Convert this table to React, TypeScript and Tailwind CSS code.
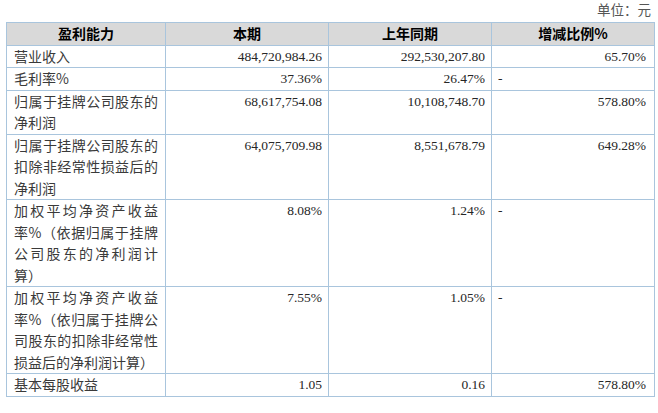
const rows: { label: string; cur: string; prev: string; change: string; dash?: boolean }[] = [
  { label: "营业收入", cur: "484,720,984.26", prev: "292,530,207.80", change: "65.70%" },
  { label: "毛利率%", cur: "37.36%", prev: "26.47%", change: "-", dash: true },
  { label: "归属于挂牌公司股东的净利润", cur: "68,617,754.08", prev: "10,108,748.70", change: "578.80%" },
  {
    label: "归属于挂牌公司股东的扣除非经常性损益后的净利润",
    cur: "64,075,709.98",
    prev: "8,551,678.79",
    change: "649.28%",
  },
  {
    label: "加权平均净资产收益率%（依据归属于挂牌公司股东的净利润计算）",
    cur: "8.08%",
    prev: "1.24%",
    change: "-",
    dash: true,
  },
  {
    label: "加权平均净资产收益率%（依归属于挂牌公司股东的扣除非经常性损益后的净利润计算）",
    cur: "7.55%",
    prev: "1.05%",
    change: "-",
    dash: true,
  },
  { label: "基本每股收益", cur: "1.05", prev: "0.16", change: "578.80%" },
];

export default function App() {
  const cell = "border border-[#a9c5dd] align-top leading-[21.5px] p-0";
  return (
    <div className="w-[658px] h-[413px] bg-white font-['Liberation_Serif','Noto_Sans_CJK_SC',serif] text-[#262626]">
      <div className="h-[22px] pr-[7px] pt-[3px] text-right text-[13.5px] leading-[16px] text-[#555]">
        单位：元
      </div>
      <table className="ml-[6px] w-[648px] table-fixed border-collapse">
        <colgroup>
          <col className="w-[159px]" />
          <col className="w-[163px]" />
          <col className="w-[163px]" />
          <col className="w-[163px]" />
        </colgroup>
        <thead>
          <tr className="bg-[#d9d9d9] font-['Noto_Sans_CJK_SC',sans-serif] text-[14px] font-bold text-black">
            <th className={`${cell} text-center align-middle`}>盈利能力</th>
            <th className={`${cell} text-center align-middle`}>本期</th>
            <th className={`${cell} text-center align-middle`}>上年同期</th>
            <th className={`${cell} text-center align-middle`}>增减比例%</th>
          </tr>
        </thead>
        <tbody>
          {rows.map((r) => (
            <tr key={r.label}>
              <td className={`${cell} px-[7px] text-justify font-['Noto_Sans_CJK_SC',sans-serif] text-[14px] text-[#3a3a3a]`}>
                {r.label}
              </td>
              <td className={`${cell} pr-[6px] text-right text-[13.5px]`}>{r.cur}</td>
              <td className={`${cell} pr-[6px] text-right text-[13.5px]`}>{r.prev}</td>
              <td className={`${cell} text-[13.5px] ${r.dash ? "pl-[6px] text-left" : "pr-[8px] text-right"}`}>
                {r.change}
              </td>
            </tr>
          ))}
        </tbody>
      </table>
    </div>
  );
}
